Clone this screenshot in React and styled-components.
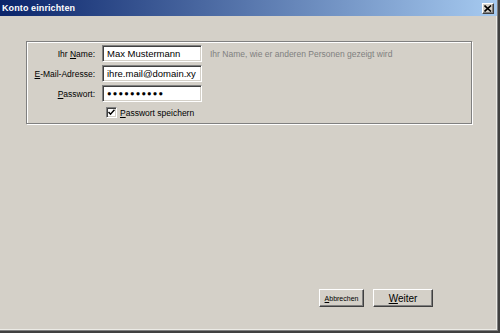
import React from "react";
import styled, { createGlobalStyle } from "styled-components";

const Global = createGlobalStyle`
  html, body { margin: 0; padding: 0; background: #d4d0c8; }
  body { font-family: "Liberation Sans", Arial, sans-serif; }
  * { box-sizing: border-box; }
`;

const Window = styled.div`
  width: 500px;
  height: 333px;
  display: flex;
  flex-direction: column;
  background: #d4d0c8;
  border-right: 2px solid #404040;
  border-bottom: 2px solid #404040;
  box-shadow: inset -1px -1px 0 #808080, inset -2px -2px 0 #ecebe6;
`;

const TitleBar = styled.div`
  height: 16px;
  margin-right: 1px;
  display: flex;
  align-items: center;
  justify-content: space-between;
  padding: 0 3px 0 2px;
  background: linear-gradient(to right, #0a246a, #a6caf0);
`;

const Title = styled.span`
  color: #fff;
  font-weight: bold;
  font-size: 9px;
  letter-spacing: 0.1px;
`;

const CloseButton = styled.div`
  width: 12px;
  height: 11px;
  margin-top: 1px;
  background: #d4d0c8;
  border-top: 1px solid #fff;
  border-left: 1px solid #fff;
  border-right: 1px solid #404040;
  border-bottom: 1px solid #404040;
  box-shadow: inset -1px -1px 0 #808080;
  display: flex;
  align-items: center;
  justify-content: center;
`;

const Body = styled.div`
  flex: 1;
  display: flex;
  flex-direction: column;
  padding: 25px 24px 24px 26px;
`;

const GroupBox = styled.div`
  width: 446px;
  border: 1px solid #808080;
  box-shadow: 1px 1px 0 #fff, inset 1px 1px 0 #fff;
  padding: 3px 0 5px 0;
  display: grid;
  grid-template-columns: 68px 100px auto;
  column-gap: 7px;
  row-gap: 3px;
  align-items: center;
`;

const Label = styled.label`
  font-size: 8.5px;
  color: #000;
  text-align: right;
`;

const TextBox = styled.div`
  height: 17px;
  background: #fff;
  border: 1px solid;
  border-color: #808080 #fff #fff #808080;
  box-shadow: inset 1px 1px 0 #404040, inset -1px -1px 0 #d4d0c8;
  padding: 0 0 0 4px;
  display: flex;
  align-items: center;
  font-size: ${(p) => (p.$masked ? "7.5px" : "9.5px")};
  letter-spacing: ${(p) => (p.$masked ? "1.2px" : "0")};
  white-space: nowrap;
  overflow: hidden;
  color: #000;
`;

const Hint = styled.span`
  font-size: 8.5px;
  color: #808080;
  padding-left: 1px;
`;

const CheckRow = styled.div`
  grid-column: 2 / 4;
  display: flex;
  align-items: center;
  gap: 3px;
  padding-left: 4px;
  margin-top: 2px;
  font-size: 8.5px;
`;

const CheckBox = styled.span`
  width: 11px;
  height: 11px;
  background: #fff;
  border: 1px solid;
  border-color: #808080 #fff #fff #808080;
  box-shadow: inset 1px 1px 0 #404040, inset -1px -1px 0 #d4d0c8;
  display: flex;
  align-items: center;
  justify-content: center;
`;

const Spacer = styled.div`
  flex: 1;
`;

const ButtonRow = styled.div`
  display: flex;
  justify-content: flex-end;
  gap: 9px;
  padding-right: 41px;
`;

const Button = styled.div`
  width: ${(p) => p.$w}px;
  height: 18px;
  background: #d4d0c8;
  border-top: 1px solid #fff;
  border-left: 1px solid #fff;
  border-right: 1px solid #404040;
  border-bottom: 1px solid #404040;
  box-shadow: inset -1px -1px 0 #808080;
  display: flex;
  align-items: center;
  justify-content: center;
  font-size: ${(p) => p.$fs}px;
  color: #000;
`;

export default function App() {
  return (
    <>
      <Global />
      <Window>
        <TitleBar>
          <Title>Konto einrichten</Title>
          <CloseButton>
            <svg width="8" height="7" viewBox="0 0 8 7">
              <path d="M0.5 0.5 L7 6.5 M7 0.5 L0.5 6.5" stroke="#000" strokeWidth="1.6" />
            </svg>
          </CloseButton>
        </TitleBar>
        <Body>
          <GroupBox>
            <Label>
              Ihr <u>N</u>ame:
            </Label>
            <TextBox>Max Mustermann</TextBox>
            <Hint>Ihr Name, wie er anderen Personen gezeigt wird</Hint>

            <Label>
              <u>E</u>-Mail-Adresse:
            </Label>
            <TextBox>ihre.mail@domain.xy</TextBox>
            <span />

            <Label>
              <u>P</u>asswort:
            </Label>
            <TextBox $masked>●●●●●●●●●●</TextBox>
            <span />

            <CheckRow>
              <CheckBox>
                <svg width="7" height="7" viewBox="0 0 7 7">
                  <path d="M0.5 3 L2.5 5.2 L6.5 0.8" fill="none" stroke="#000" strokeWidth="1.5" />
                </svg>
              </CheckBox>
              <span>
                <u>P</u>asswort speichern
              </span>
            </CheckRow>
          </GroupBox>
          <Spacer />
          <ButtonRow>
            <Button $w={45} $fs={7}>
              <span>
                <u>A</u>bbrechen
              </span>
            </Button>
            <Button $w={60} $fs={10}>
              <span>
                <u>W</u>eiter
              </span>
            </Button>
          </ButtonRow>
        </Body>
      </Window>
    </>
  );
}
